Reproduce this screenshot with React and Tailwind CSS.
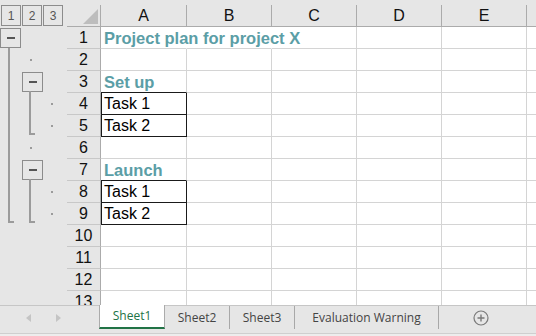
const COLUMNS = [
  { key: "A", width: "w-[86px]" },
  { key: "B", width: "w-[85px]" },
  { key: "C", width: "w-[85px]" },
  { key: "D", width: "w-[85px]" },
  { key: "E", width: "w-[85px]" },
];

const ROWS = [
  { n: 1, text: "Project plan for project X", title: true, spill: 2 },
  { n: 2 },
  { n: 3, text: "Set up", title: true, darkBottom: true },
  { n: 4, text: "Task 1", boxed: true },
  { n: 5, text: "Task 2", boxed: true },
  { n: 6 },
  { n: 7, text: "Launch", title: true, darkBottom: true },
  { n: 8, text: "Task 1", boxed: true },
  { n: 9, text: "Task 2", boxed: true },
  { n: 10 },
  { n: 11 },
  { n: 12 },
  { n: 13 },
];

const TABS = [
  { label: "Sheet1", width: "w-[66px]", active: true },
  { label: "Sheet2", width: "w-[64px]" },
  { label: "Sheet3", width: "w-[65px]" },
  { label: "Evaluation Warning", width: "w-[145px]" },
];

const LevelButton = ({ children }) => (
  <div className="mt-[5px] flex h-[21px] w-[20px] items-center justify-center border border-[#8c8c8c] text-[12px] text-[#555]">
    {children}
  </div>
);

const CollapseButton = ({ className }) => (
  <div
    className={`mt-[1px] -ml-[1px] flex h-[20px] w-[21px] items-center justify-center border border-[#8c8c8c] ${className}`}
  >
    <div className="h-[2px] w-[8px] bg-[#555]" />
  </div>
);

const Dot = ({ className }) => (
  <div className={`ml-[8px] h-[2px] w-[2px] self-center bg-[#9b9b9b] ${className}`} />
);

const Bracket = ({ className }) => (
  <div
    className={`ml-[7px] w-[6px] border-b-2 border-l-2 border-[#9b9b9b] ${className}`}
  />
);

const OutlineGutter = () => (
  <div className="grid w-[67px] shrink-0 grid-cols-[21px_21px_21px] grid-rows-[27px_repeat(13,22px)] bg-[#e6e6e6] pl-[1px]">
    <div className="col-start-1 row-start-1">
      <LevelButton>1</LevelButton>
    </div>
    <div className="col-start-2 row-start-1">
      <LevelButton>2</LevelButton>
    </div>
    <div className="col-start-3 row-start-1">
      <LevelButton>3</LevelButton>
    </div>

    <CollapseButton className="col-start-1 row-start-2" />
    <Bracket className="col-start-1 row-start-3 row-end-11 -mt-[1px] mb-[2px]" />

    <Dot className="col-start-2 row-start-3" />
    <CollapseButton className="col-start-2 row-start-4 ml-0" />
    <Bracket className="col-start-2 row-start-5 row-end-7 -mt-[2px] mb-[2px]" />
    <Dot className="col-start-3 row-start-5" />
    <Dot className="col-start-3 row-start-6" />

    <Dot className="col-start-2 row-start-7" />
    <CollapseButton className="col-start-2 row-start-8 ml-0" />
    <Bracket className="col-start-2 row-start-9 row-end-11 -mt-[2px] mb-[2px]" />
    <Dot className="col-start-3 row-start-9" />
    <Dot className="col-start-3 row-start-10" />
  </div>
);

const ColumnHeader = () => (
  <div className="flex h-[27px] shrink-0 border-b border-[#ababab] bg-[#e6e6e6] pt-[5px]">
    <div className="flex h-[21px] w-[34px] shrink-0 items-end justify-end border-r border-[#ababab] pr-[2px] pb-[2px]">
      <svg width="15" height="15" viewBox="0 0 15 15">
        <polygon points="15,0 15,15 0,15" fill="#bdbdbd" />
      </svg>
    </div>
    {COLUMNS.map((col) => (
      <div
        key={col.key}
        className={`${col.width} flex h-[21px] shrink-0 items-center justify-center border-r border-[#ababab] text-[16px] text-[#111]`}
      >
        {col.key}
      </div>
    ))}
    <div className="flex-1" />
  </div>
);

const SheetRow = ({ row, nextBoxed }) => (
  <div className="flex h-[22px] shrink-0">
    <div className="flex w-[34px] shrink-0 items-center justify-center border-r border-b border-r-[#ababab] border-b-[#c8c8c8] bg-[#e6e6e6] pt-[1px] text-[16px] text-[#111]">
      {row.n}
    </div>
    {COLUMNS.map((col, i) => {
      const isA = i === 0;
      const hideRight = row.spill && i < row.spill;
      const darkBottom = isA && (row.boxed || row.darkBottom || nextBoxed);
      const darkSides = isA && row.boxed;
      return (
        <div
          key={col.key}
          className={`${col.width} flex shrink-0 items-center border-r border-b pt-[1px] pl-[3px] ${
            hideRight
              ? "border-r-transparent"
              : darkSides
              ? "border-r-[#1a1a1a]"
              : "border-r-[#d4d4d4]"
          } ${darkBottom ? "border-b-[#1a1a1a]" : "border-b-[#d4d4d4]"} ${
            darkSides ? "shadow-[inset_1px_0_0_#1a1a1a]" : ""
          }`}
        >
          {isA && row.text ? (
            <span
              className={`whitespace-nowrap ${
                row.title
                  ? "text-[16.5px] font-bold text-[#5b9ea6]"
                  : "text-[16px] text-black"
              }`}
            >
              {row.text}
            </span>
          ) : null}
        </div>
      );
    })}
    <div className="flex-1 border-b border-[#d4d4d4]" />
  </div>
);

const TabBar = () => (
  <div className="flex h-[31px] shrink-0 flex-col bg-[#e6e6e6] font-['Open_Sans',sans-serif]">
    <div className="flex h-[28px] border-t border-[#c6c6c6]">
      <div className="flex w-[99px] shrink-0 items-center gap-[25px] pl-[26px] pb-[4px]">
        <svg width="5" height="8" viewBox="0 0 5 8">
          <polygon points="5,0 5,8 0,4" fill="#c4c4c4" />
        </svg>
        <svg width="5" height="8" viewBox="0 0 5 8">
          <polygon points="0,0 0,8 5,4" fill="#c4c4c4" />
        </svg>
      </div>
      {TABS.map((tab, i) =>
        tab.active ? (
          <div
            key={tab.label}
            className={`${tab.width} -mt-[1px] flex h-[24px] shrink-0 items-center justify-center border-x border-[#ababab] border-b-2 border-b-[#217346] bg-white text-[12px] text-[#217346]`}
          >
            {tab.label}
          </div>
        ) : (
          <div
            key={tab.label}
            className={`${tab.width} flex h-[23px] shrink-0 items-center justify-center text-[12px] text-[#444] ${
              i > 1 ? "border-l border-[#a8a8a8]" : ""
            } ${i === TABS.length - 1 ? "border-r border-[#a8a8a8]" : ""}`}
          >
            {tab.label}
          </div>
        )
      )}
      <div className="ml-[34px] flex h-[23px] items-center">
        <svg width="16" height="16" viewBox="0 0 16 16" fill="none">
          <circle cx="8" cy="8" r="7" stroke="#7a7a7a" strokeWidth="1.2" />
          <path d="M8 4.5v7M4.5 8h7" stroke="#7a7a7a" strokeWidth="1.4" />
        </svg>
      </div>
    </div>
    <div className="flex-1 border-t border-[#cfcfcf] bg-[#ededed]" />
  </div>
);

export default function App() {
  return (
    <div className="flex h-[336px] w-[536px] flex-col overflow-hidden bg-white font-['Liberation_Sans',Arial,sans-serif]">
      <div className="flex h-[305px] shrink-0 overflow-hidden">
        <OutlineGutter />
        <div className="flex min-w-0 flex-1 flex-col">
          <ColumnHeader />
          {ROWS.map((row, i) => (
            <SheetRow key={row.n} row={row} nextBoxed={ROWS[i + 1]?.boxed} />
          ))}
        </div>
      </div>
      <TabBar />
    </div>
  );
}
